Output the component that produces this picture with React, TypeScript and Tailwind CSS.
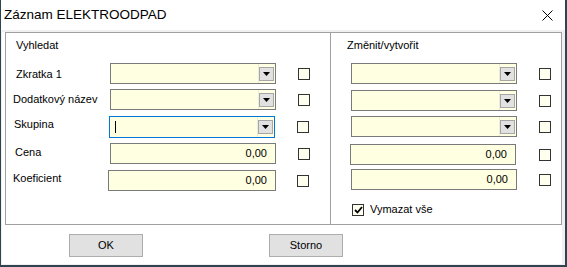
import React from "react";

const font = { fontFamily: '"Liberation Sans", Arial, sans-serif' };

function Arrow() {
  return (
    <svg width="7" height="4" viewBox="0 0 7 4">
      <polygon points="0,0 7,0 3.5,4" fill="#000" />
    </svg>
  );
}

function Combo({ focused = false, className = "" }: { focused?: boolean; className?: string }) {
  return (
    <div
      className={`relative flex h-[21px] w-[166px] items-center border bg-[#ffffe1] ${
        focused ? "border-[#0078d7]" : "border-[#7a7a7a]"
      } ${className}`}
    >
      {focused && <div className="ml-[5px] h-[12px] w-[1px] bg-black" />}
      <div className="absolute right-[16px] top-0 h-full w-[1px] bg-[#ececdc]" />
      <div className="absolute right-[1px] top-[3px] flex h-[14px] w-[15px] items-center justify-center border border-[#a6a6a6] bg-[#e1e1e1]">
        <Arrow />
      </div>
    </div>
  );
}

function NumInput({ className = "" }: { className?: string }) {
  return (
    <div
      className={`flex h-[21px] w-[166px] items-center justify-end border border-[#7a7a7a] bg-[#ffffe1] pr-[8px] text-[11px] text-black ${className}`}
    >
      0,00
    </div>
  );
}

function Check({ checked = false, className = "" }: { checked?: boolean; className?: string }) {
  return (
    <div className={`flex h-[12px] w-[12px] items-center justify-center border border-[#333] bg-[#fffff0] ${className}`}>
      {checked && (
        <svg width="9" height="8" viewBox="0 0 9 8">
          <polyline points="1,4 3.5,6.5 8,1" fill="none" stroke="#000" strokeWidth="1.8" />
        </svg>
      )}
    </div>
  );
}

export default function App() {
  return (
    <div className="h-[267px] w-[567px] bg-[#2f4350]" style={font}>
      <div className="ml-[1px] flex h-[265px] w-[564px] flex-col bg-white">
        {/* Title bar */}
        <div className="flex h-[30px] items-center justify-between pl-[3px] pr-[12px]">
          <span className="text-[13.5px] text-black">Záznam ELEKTROODPAD</span>
          <svg width="11" height="11" viewBox="0 0 11 11">
            <path d="M0.5 0.5 L10.5 10.5 M10.5 0.5 L0.5 10.5" stroke="#000" strokeWidth="1" />
          </svg>
        </div>
        {/* Client */}
        <div className="flex flex-1 flex-col border-b border-l border-r-[3px] border-t-2 border-[#f0f0f0] bg-white">
          <div className="ml-[3px] flex h-[193px] w-[557px] border border-[#a0a0a0] text-[11px] text-black">
            {/* Left panel */}
            <div className="flex w-[325px] flex-col border-r border-[#a0a0a0]">
              <div className="ml-[10px] mt-[6px] h-[13px] leading-[13px]">Vyhledat</div>
              <div className="mt-[11px] flex h-[21px] items-center">
                <span className="ml-[10px] mt-[2px] w-[94px]">Zkratka 1</span>
                <Combo />
                <Check className="ml-[22px]" />
              </div>
              <div className="mt-[5px] flex h-[21px] items-center">
                <span className="ml-[7px] w-[97px]">Dodatkový název</span>
                <Combo />
                <Check className="ml-[22px]" />
              </div>
              <div className="mt-[6px] flex h-[21px] items-center">
                <span className="ml-[8px] mb-[4px] w-[95px]">Skupina</span>
                <Combo focused className="h-[22px]" />
                <Check className="ml-[22px]" />
              </div>
              <div className="mt-[6px] flex h-[21px] items-center">
                <span className="ml-[9px] mb-[2px] w-[95px]">Cena</span>
                <NumInput />
                <Check className="ml-[22px]" />
              </div>
              <div className="mt-[6px] flex h-[21px] items-center">
                <span className="ml-[7px] mb-[5px] w-[95px]">Koeficient</span>
                <NumInput className="w-[168px]" />
                <Check className="ml-[21px]" />
              </div>
            </div>
            {/* Right panel */}
            <div className="flex flex-1 flex-col">
              <div className="ml-[16px] mt-[6px] h-[13px] leading-[13px]">Změnit/vytvořit</div>
              <div className="ml-[20px] mt-[11px] flex h-[21px] items-center">
                <Combo className="w-[165px]" />
                <Check className="ml-[22px]" />
              </div>
              <div className="ml-[20px] mt-[6px] flex h-[21px] items-center">
                <Combo className="w-[165px]" />
                <Check className="ml-[22px]" />
              </div>
              <div className="ml-[20px] mt-[5px] flex h-[21px] items-center">
                <Combo className="w-[165px]" />
                <Check className="ml-[22px]" />
              </div>
              <div className="ml-[19px] mt-[7px] flex h-[21px] items-center">
                <NumInput className="w-[165px]" />
                <Check className="ml-[23px]" />
              </div>
              <div className="ml-[20px] mt-[4px] flex h-[21px] items-center">
                <NumInput className="w-[165px]" />
                <Check className="ml-[22px]" />
              </div>
              <div className="ml-[21px] mt-[13px] flex h-[13px] items-center">
                <Check checked />
                <span className="ml-[6px]">Vymazat vše</span>
              </div>
            </div>
          </div>
          <div className="mt-[9px] flex text-[11px] text-black">
            <button className="ml-[67px] flex h-[23px] w-[74px] items-center justify-center border border-[#adadad] bg-[#e1e1e1]">
              OK
            </button>
            <button className="ml-[126px] flex h-[23px] w-[74px] items-center justify-center border border-[#adadad] bg-[#e1e1e1]">
              Storno
            </button>
          </div>
        </div>
      </div>
    </div>
  );
}
